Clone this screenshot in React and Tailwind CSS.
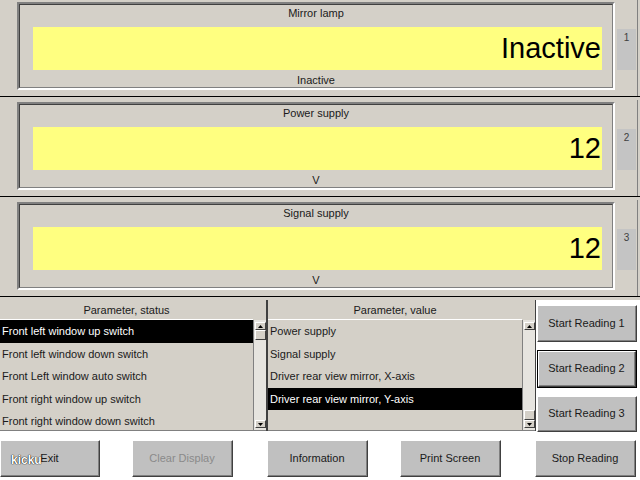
import React from 'react';

// classic grey panel colours
const readouts = [
  { title: 'Mirror lamp', value: 'Inactive', unit: 'Inactive', n: '1' },
  { title: 'Power supply', value: '12', unit: 'V', n: '2' },
  { title: 'Signal supply', value: '12', unit: 'V', n: '3' },
];

const statusItems = [
  'Front left window up switch',
  'Front left window down switch',
  'Front Left window auto switch',
  'Front right window up switch',
  'Front right window down switch',
];

const valueItems = [
  'Power supply',
  'Signal supply',
  'Driver rear view mirror, X-axis',
  'Driver rear view mirror, Y-axis',
  '',
];

function Readout({ title, value, unit, n }) {
  return (
    <div className="h-[100px] flex flex-col">
      <div className="h-[96px] flex items-start pl-[17px]">
        <div className="mt-[2px] w-[598px] border-2 border-t-[#808080] border-l-[#808080] border-b-white border-r-white">
          <div className="border border-t-[#404040] border-l-[#404040] border-b-[#808080] border-r-[#808080]">
            <div className="h-[16px] flex items-center justify-center text-[11px] text-[#1a1a1a]">{title}</div>
            <div className="mt-[6px] ml-[13px] w-[569px] h-[43px] bg-[#ffff80] flex items-center justify-end pr-[1px] text-[29px] leading-none text-black">
              {value}
            </div>
            <div className="mt-[3px] h-[14px] flex items-center justify-center text-[11px] text-[#1a1a1a]">{unit}</div>
          </div>
        </div>
        <div className="ml-[2px] mt-[29px] w-[19px] h-[41px] bg-[#c4c4c4] text-[10px] leading-none text-center pt-[4px] text-[#404040]">{n}</div>
        <div className="ml-[1px] w-[1px] self-stretch bg-[#808080]" />
      </div>
      <div className="h-[1px] bg-black" />
    </div>
  );
}

function Arrow({ down }) {
  return (
    <div className="w-[11px] h-[8px] bg-[#d4d0c8] border border-t-white border-l-white border-b-[#404040] border-r-[#404040] flex items-center justify-center">
      <svg width="5" height="3" viewBox="0 0 5 3">
        {down ? <polygon points="0,0 5,0 2.5,3" fill="#000" /> : <polygon points="0,3 5,3 2.5,0" fill="#000" />}
      </svg>
    </div>
  );
}

function Scrollbar({ thumbAtBottom }) {
  return (
    <div className="w-[13px] flex flex-col">
      <div className="h-[19px]" />
      <div className="flex-1 bg-[#e6e4df] border-l border-l-[#808080] flex flex-col items-center pt-[2px] pb-[2px]">
        <Arrow />
        {!thumbAtBottom && (
          <div className="w-[11px] h-[10px] bg-[#d4d0c8] border border-t-white border-l-white border-b-[#404040] border-r-[#404040]" />
        )}
        <div className="flex-1" />
        {thumbAtBottom && (
          <div className="w-[11px] h-[10px] bg-[#d4d0c8] border border-t-white border-l-white border-b-[#404040] border-r-[#404040]" />
        )}
        <Arrow down />
      </div>
    </div>
  );
}

function ListBox({ header, items, selected, width, thumbAtBottom }) {
  return (
    <div className="flex h-[131px] pt-[1px] border-b border-b-[#808080] bg-[#d4d0c8]">
      <div className="flex flex-col overflow-hidden" style={{ width }}>
        <div className="h-[19px] shrink-0 border-b border-b-white flex items-center justify-center text-[11px] text-[#1a1a1a]">{header}</div>
        {items.map((item, i) => (
          <div
            key={i}
            className={
              i === selected
                ? 'h-[22.5px] shrink-0 px-[2px] flex items-center text-[11px] bg-black text-white'
                : 'h-[22.5px] shrink-0 px-[2px] flex items-center text-[11px] text-[#1a1a1a]'
            }
          >
            {item}
          </div>
        ))}
      </div>
      <Scrollbar thumbAtBottom={thumbAtBottom} />
    </div>
  );
}

function Button({ label, disabled, focused, className }) {
  const btn = (
    <div className="w-full h-full bg-[#c0c0c0] border border-t-white border-l-white border-b-[#404040] border-r-[#404040]">
      <div
        className={
          disabled
            ? 'h-full border-r border-b border-r-[#808080] border-b-[#808080] flex items-center justify-center text-[11px] text-[#8a8a8a]'
            : 'h-full border-r border-b border-r-[#808080] border-b-[#808080] flex items-center justify-center text-[11px] text-[#1a1a1a]'
        }
      >
        {label}
      </div>
    </div>
  );
  if (focused) {
    return <div className={'border border-black ' + className}>{btn}</div>;
  }
  return <div className={className}>{btn}</div>;
}

export default function App() {
  return (
    <div className="relative w-[640px] h-[480px] overflow-hidden bg-[#d4d0c8] font-['Liberation_Sans',Arial,sans-serif]">
      {readouts.map((r) => (
        <Readout key={r.n} {...r} />
      ))}

      <div className="flex h-[132px] bg-white">
        <ListBox header="Parameter, status" items={statusItems} selected={0} width={253} />
        <div className="w-[2px] h-[131px] bg-[#404040]" />
        <ListBox header="Parameter, value" items={valueItems} selected={3} width={254} thumbAtBottom />
        <div className="w-[1px] h-[131px] bg-[#404040]" />
        <div className="flex flex-col pl-[1px] pt-[5px]">
          <Button label="Start Reading 1" className="w-[100px] h-[37px]" />
          <Button label="Start Reading 2" focused className="mt-[8px] w-[100px] h-[38px]" />
          <Button label="Start Reading 3" className="mt-[8px] w-[100px] h-[36px]" />
        </div>
      </div>

      <div className="h-[48px] bg-white pt-[8px]">
        <div className="flex">
          <Button label="Exit" className="w-[100px] h-[37px]" />
          <Button label="Clear Display" disabled className="ml-[32px] w-[101px] h-[37px]" />
          <Button label="Information" className="ml-[34px] w-[101px] h-[37px]" />
          <Button label="Print Screen" className="ml-[32px] w-[101px] h-[37px]" />
          <Button label="Stop Reading" className="ml-[34px] w-[101px] h-[37px]" />
        </div>
      </div>

      <div className="absolute left-[11px] top-[454px] text-[12px] leading-none font-bold text-white [text-shadow:0_0_1px_#000,0_0_1px_#000]">
        kicku
      </div>
    </div>
  );
}
